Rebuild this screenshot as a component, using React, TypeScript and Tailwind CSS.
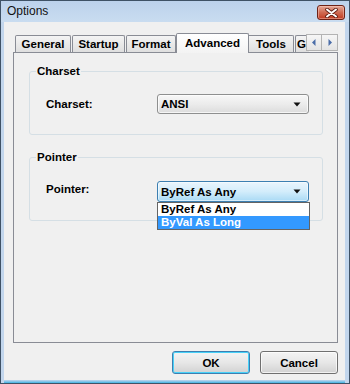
import React from "react";

function Combo({ text, focused }: { text: string; focused?: boolean }) {
  return (
    <div
      className={
        focused
          ? "relative w-[152px] h-[21px] rounded-[3px] border border-[#3c7fb1] bg-linear-to-b from-[#e9f5fd] via-[#d3edfb] to-[#a9daf5] flex items-center pl-[3px] pr-[7px] shadow-[inset_0_0_0_1px_rgba(255,255,255,0.5)]"
          : "relative w-[152px] h-[20px] rounded-[3px] border border-[#8e8f8f] bg-linear-to-b from-[#f7f7f7] via-[#ececec] to-[#dcdcdc] flex items-center pl-[3px] pr-[7px] shadow-[inset_0_0_0_1px_rgba(255,255,255,0.7)]"
      }
    >
      <span className="flex-1 text-[11.5px] font-bold leading-[14px] text-black">{text}</span>
      <svg width="8" height="5" viewBox="0 0 8 5">
        <path d="M0.5 0.5 H7.5 L4 4.5 Z" fill="#111" />
      </svg>
    </div>
  );
}

export default function App() {
  return (
    <div className="w-[350px] h-[384px] border border-[#3f5266] bg-[#c2d6ed] flex flex-col font-['Liberation_Sans',Arial,sans-serif] text-black select-none overflow-hidden">
      {/* title bar */}
      <div className="h-[21px] flex items-start justify-between bg-linear-to-b from-[#bcd2ec] to-[#c9dcf0]">
        <span className="pl-[6px] pt-[3px] text-[12px] leading-[15px] text-[#111]">Options</span>
        <div className="mt-[4px] mr-[4px] w-[28px] h-[15px] rounded-[3px] border border-[#6e2216] bg-linear-to-b from-[#e4a898] via-[#cf6a52] to-[#c1391f] flex items-center justify-center shadow-[inset_0_0_0_1px_rgba(255,210,200,0.45)]">
          <svg width="13" height="10" viewBox="0 0 13 10">
            <path d="M2 1.5 L11 8.5 M11 1.5 L2 8.5" stroke="#5a1a10" strokeWidth="3.6" strokeLinecap="round" />
            <path d="M2 1.5 L11 8.5 M11 1.5 L2 8.5" stroke="#ffffff" strokeWidth="2" strokeLinecap="round" />
          </svg>
        </div>
      </div>

      {/* body */}
      <div className="flex-1 flex flex-col pl-[3px] pr-[4px]">
        <div className="h-[358px] bg-[#f0f0f0] flex flex-col">
          {/* tabs */}
          <div className="relative ml-[9px] mt-[11px] h-[20px] -mb-px flex items-end pl-[2px] z-10">
            <div className="w-[56px] h-[17px] mb-px border border-b-0 border-[#898c95] rounded-t-[2px] bg-linear-to-b from-[#f4f4f4] to-[#dfdfdf] flex items-center justify-center text-[11.5px] font-bold leading-[14px]">
              General
            </div>
            <div className="ml-px w-[53px] h-[17px] mb-px border border-b-0 border-[#898c95] rounded-t-[2px] bg-linear-to-b from-[#f4f4f4] to-[#dfdfdf] flex items-center justify-center text-[11.5px] font-bold leading-[14px]">
              Startup
            </div>
            <div className="ml-px w-[50px] h-[17px] mb-px border border-b-0 border-[#898c95] rounded-t-[2px] bg-linear-to-b from-[#f4f4f4] to-[#dfdfdf] flex items-center justify-center text-[11.5px] font-bold leading-[14px]">
              Format
            </div>
            <div className="w-[73px] h-[20px] border border-b-0 border-[#898c95] rounded-t-[2px] bg-linear-to-b from-[#ffffff] to-[#f3f3f3] flex items-start justify-center pt-[2px] text-[11.5px] font-bold leading-[14px]">
              Advanced
            </div>
            <div className="w-[45px] h-[17px] mb-px border border-b-0 border-l-0 border-[#898c95] rounded-tr-[2px] bg-linear-to-b from-[#f4f4f4] to-[#dfdfdf] flex items-center justify-center text-[11.5px] font-bold leading-[14px]">
              Tools
            </div>
            <div className="ml-px w-[14px] h-[17px] mb-px border border-b-0 border-r-0 border-[#898c95] rounded-tl-[2px] bg-linear-to-b from-[#f4f4f4] to-[#dfdfdf] flex items-center pl-[1px] text-[11.5px] font-bold leading-[14px]">
              G
            </div>
            {/* scroll arrows */}
            <div className="absolute left-[293px] top-[1px] h-[17px] flex bg-[#f0f0f0]">
              <div className="w-[16px] h-[17px] border border-[#b3b3b3] bg-linear-to-b from-[#f6f6f6] to-[#e4e4e4] flex items-center justify-center">
                <svg width="4" height="7" viewBox="0 0 4 7">
                  <path d="M3.5 0 V7 L0 3.5 Z" fill="#4a6da8" />
                </svg>
              </div>
              <div className="w-[16px] h-[17px] border border-l-0 border-[#b3b3b3] bg-linear-to-b from-[#f6f6f6] to-[#e4e4e4] flex items-center justify-center">
                <svg width="4" height="7" viewBox="0 0 4 7">
                  <path d="M0.5 0 V7 L4 3.5 Z" fill="#4a6da8" />
                </svg>
              </div>
            </div>
          </div>

          {/* panel */}
          <div className="ml-[9px] w-[325px] h-[291px] border border-[#898c95] bg-[#f0f0f0] flex flex-col">
            {/* Charset group */}
            <div className="relative ml-[15px] mt-[18px] w-[294px] h-[64px] border border-[#d5dfe5] rounded-[3px] pt-[22px]">
              <span className="absolute left-[6px] -top-[8px] px-px bg-[#f0f0f0] text-[11.5px] font-bold leading-[14px]">
                Charset
              </span>
              <div className="flex items-center pl-[16px]">
                <span className="w-[111px] text-[11.5px] font-bold leading-[14px]">Charset:</span>
                <Combo text="ANSI" />
              </div>
            </div>

            {/* Pointer group */}
            <div className="relative ml-[15px] mt-[22px] w-[294px] h-[64px] border border-[#d5dfe5] rounded-[3px] pt-[23px]">
              <span className="absolute left-[6px] -top-[8px] px-px bg-[#f0f0f0] text-[11.5px] font-bold leading-[14px]">
                Pointer
              </span>
              <div className="flex items-center pl-[16px]">
                <span className="w-[111px] text-[11.5px] font-bold leading-[14px] -mt-[6px]">Pointer:</span>
                <div className="relative">
                  <Combo text="ByRef As Any" focused />
                  <div className="absolute left-0 top-full w-[153px] h-[28px] border border-[#646464] bg-white flex flex-col z-20">
                    <div className="h-[13px] pl-[3px] text-[11.5px] font-bold leading-[13px] text-black">ByRef As Any</div>
                    <div className="h-[13px] pl-[3px] bg-[#3399ff] text-[11.5px] font-bold leading-[13px] text-white">ByVal As Long</div>
                  </div>
                </div>
              </div>
            </div>
          </div>

          {/* buttons */}
          <div className="mt-[8px] flex justify-end gap-[10px] pr-[7px]">
            <div className="w-[78px] h-[23px] rounded-[3px] border border-[#3c7fb1] bg-linear-to-b from-[#f4f4f4] via-[#e7e7e7] to-[#d2d2d2] flex items-center justify-center shadow-[inset_0_0_0_1px_#48d1f8] text-[11.5px] font-bold leading-[14px]">
              OK
            </div>
            <div className="w-[78px] h-[23px] rounded-[3px] border border-[#707070] bg-linear-to-b from-[#f4f4f4] via-[#e7e7e7] to-[#d2d2d2] flex items-center justify-center shadow-[inset_0_0_0_1px_rgba(255,255,255,0.7)] text-[11.5px] font-bold leading-[14px]">
              Cancel
            </div>
          </div>
        </div>
        <div className="flex-1 bg-linear-to-b from-[#c2d6ed] to-[#35b3e3]" />
      </div>
    </div>
  );
}
